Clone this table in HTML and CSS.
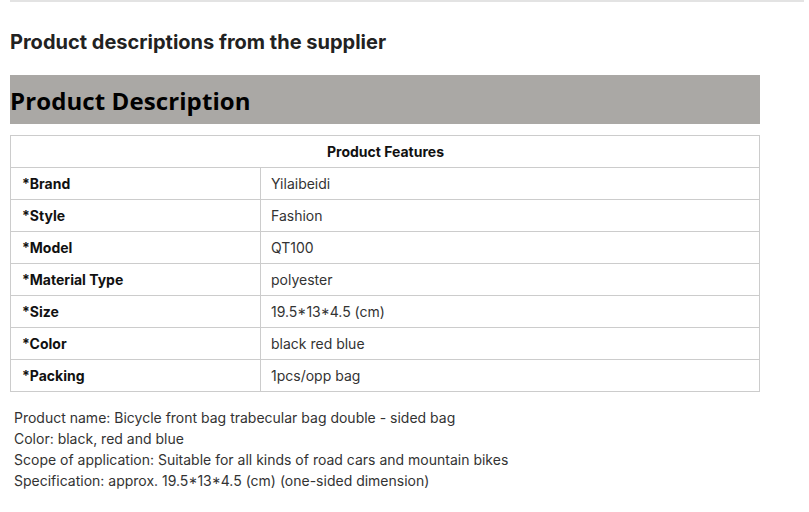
FILE: index.html
```html
<!DOCTYPE html>
<html>
<head>
<meta charset="utf-8">
<link rel="stylesheet" href="styles.css">
</head>
<body>
<div class="page">
  <hr class="rule">
  <h2 class="supplier">Product descriptions from the supplier</h2>
  <div class="banner"><h1>Product Description</h1></div>
  <table class="features">
    <tr><th colspan="2">Product Features</th></tr>
    <tr><td class="k">*Brand</td><td class="v">Yilaibeidi</td></tr>
    <tr><td class="k">*Style</td><td class="v">Fashion</td></tr>
    <tr><td class="k">*Model</td><td class="v">QT100</td></tr>
    <tr><td class="k">*Material Type</td><td class="v">polyester</td></tr>
    <tr><td class="k">*Size</td><td class="v">19.5*13*4.5 (cm)</td></tr>
    <tr><td class="k">*Color</td><td class="v">black red blue</td></tr>
    <tr><td class="k">*Packing</td><td class="v">1pcs/opp bag</td></tr>
  </table>
  <div class="notes">
    <p>Product name: Bicycle front bag trabecular bag double - sided bag</p>
    <p>Color: black, red and blue</p>
    <p>Scope of application: Suitable for all kinds of road cars and mountain bikes</p>
    <p>Specification: approx. 19.5*13*4.5 (cm) (one-sided dimension)</p>
  </div>
</div>
</body>
</html>
```
FILE: styles.css
```css
html, body { margin: 0; padding: 0; background: #fff; }
body { font-family: Inter, "Liberation Sans", sans-serif; color: #222; }
.page { padding: 0 5px 0 10px; }
.rule { margin: 0; border: 0; border-top: 2px solid #e3e3e3; }
.supplier { margin: 28px 0 0; font-size: 20px; line-height: 24px; font-weight: 700; color: #222; }
.banner { margin-top: 21px; width: 750px; height: 49px; background: #aaa8a5; }
.banner h1 { margin: 0; font-family: "Open Sans", "Noto Sans", sans-serif; font-size: 24px; line-height: 51px; font-weight: 700; color: #000; letter-spacing: 0.1px; }
.features { margin-top: 11px; width: 750px; border-collapse: collapse; font-size: 14px; color: #333; }
.features th, .features td { border: 1px solid #ccc; height: 31px; padding: 0 10px 0 11px; text-align: left; }
.features th { text-align: center; font-weight: 700; color: #111; }
.features td.k { width: 228px; font-weight: 700; color: #111; }
.features td.v { padding-left: 10px; }
.notes { margin-top: 15px; padding-left: 4px; font-size: 14px; line-height: 21px; color: #333; }
.notes p { margin: 0; }
```
